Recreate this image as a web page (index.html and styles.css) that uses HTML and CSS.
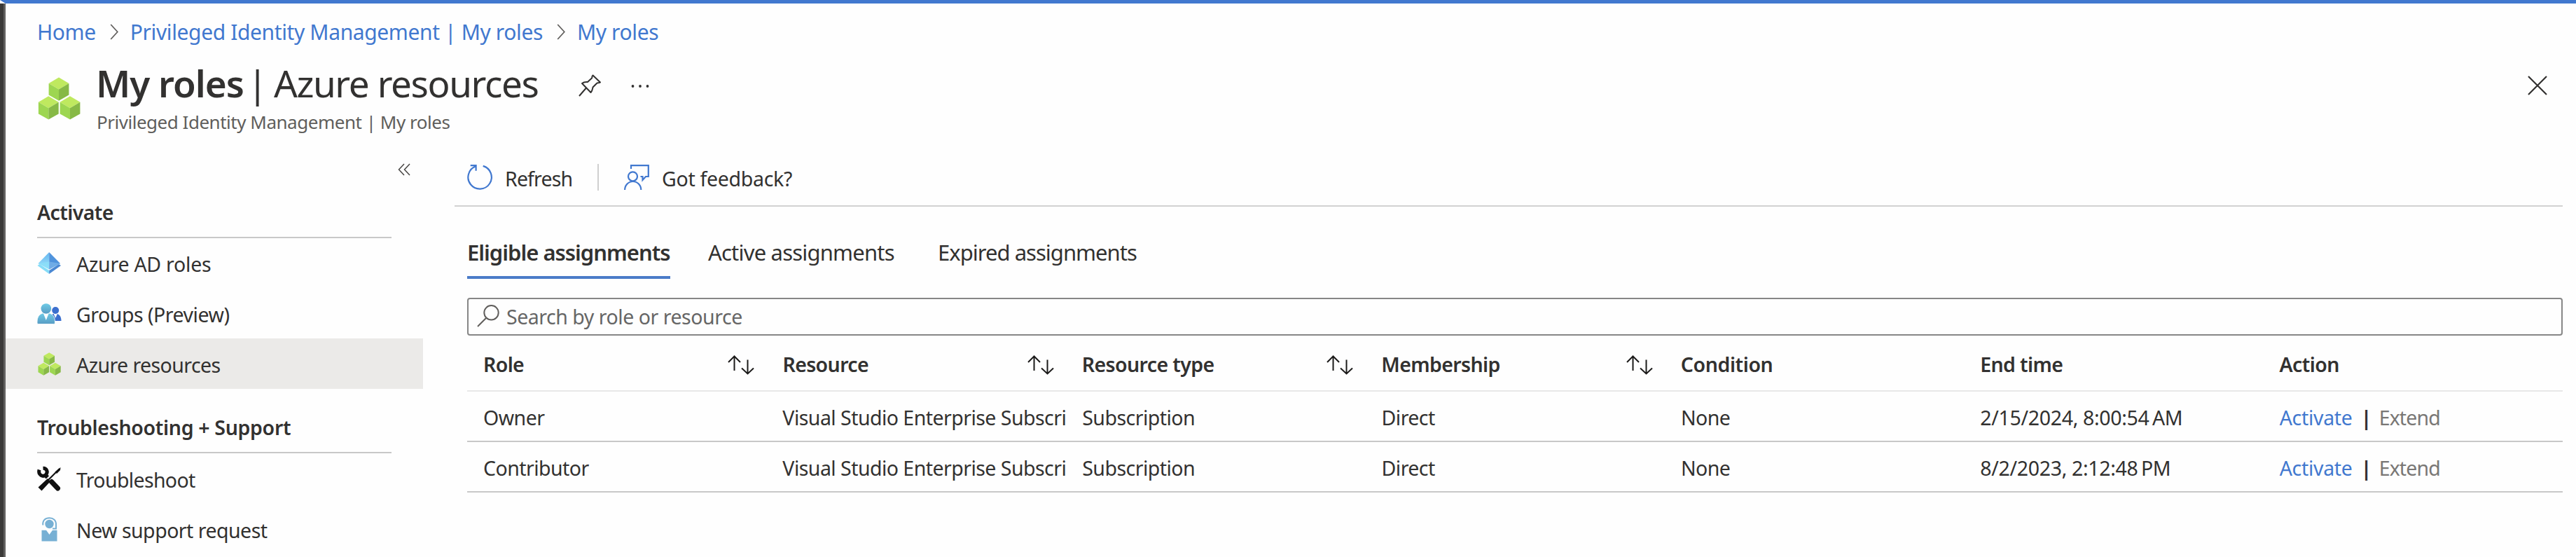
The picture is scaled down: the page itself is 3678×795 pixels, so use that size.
FILE: index.html
```html
<!DOCTYPE html>
<html lang="en">
<head>
<meta charset="utf-8">
<title>My roles | Azure resources</title>
<link rel="stylesheet" href="styles.css">
</head>
<body>
<svg class="defs" width="0" height="0" aria-hidden="true">
  <defs>
    <linearGradient id="person" x1="0" y1="0" x2="0" y2="1"><stop offset="0" stop-color="#6fcbe6"/><stop offset="1" stop-color="#589cc4"/></linearGradient>
    <linearGradient id="face" x1="0" y1="0" x2="0" y2="1"><stop offset="0" stop-color="#63b4ef"/><stop offset="1" stop-color="#a4e8fc"/></linearGradient>
    <symbol id="cubes" viewBox="0 0 61 61">
      <g id="cube">
        <path fill="#bfe95f" d="M30 .5 44.4 9 30 17.4 15.6 9z"/>
        <path fill="#9dd651" d="M15.6 9 30 17.4V33.8L15.6 25.6z"/>
        <path fill="#87b946" d="M44.4 9 30 17.4V33.8L44.4 25.6z"/>
      </g>
      <use href="#cube" x="-14.7" y="26.8"/>
      <use href="#cube" x="16" y="26.8"/>
    </symbol>
    <symbol id="sort" viewBox="0 0 38 28">
      <path fill="none" stroke="#1b1a19" stroke-width="2" d="M9.5 1.5V22M1 10 9.5 1.5 18 10M28.500 6.500V26.500M20 18.500 28.500 26.500 37 18.500"/>
    </symbol>
    <symbol id="chev" viewBox="0 0 12 24">
      <path fill="none" stroke="#605e5c" stroke-width="1.8" d="M1 1 11 12 1 23"/>
    </symbol>
  </defs>
</svg>
<div class="page">
  <nav class="crumbs">
    <a>Home</a><svg class="chev"><use href="#chev"/></svg><a>Privileged Identity Management | My roles</a><svg class="chev"><use href="#chev"/></svg><a>My roles</a>
  </nav>

  <header class="head">
    <svg class="head-icon"><use href="#cubes"/></svg>
    <div class="head-text">
      <div class="title-row">
        <h1><b>My roles</b><span class="bar">|</span><span class="sub">Azure resources</span></h1>
        <svg class="pin" viewBox="0 0 33 32"><path fill="none" stroke="#323130" stroke-width="2" stroke-linejoin="round" d="M20.500 1.500 31 11.500C29 13 27 11.500 26 13L20.500 18.500C20 21 20 23 17.500 26L5 13C8 10.500 10.500 11 13 11L19 5.500C20 4 18.500 3 20.500 1.500zM11 19.500 1 31"/></svg>
        <svg class="dots" viewBox="0 0 26 6"><g fill="#323130"><circle cx="2.500" cy="3" r="1.900"/><circle cx="13" cy="3" r="1.900"/><circle cx="23.500" cy="3" r="1.900"/></g></svg>
      </div>
      <p class="subtitle">Privileged Identity Management | My roles</p>
    </div>
    <svg class="close" viewBox="0 0 28 28"><path stroke="#323130" stroke-width="2.200" d="M1 1 27 27M27 1 1 27"/></svg>
  </header>

  <div class="body">
    <aside class="side">
      <div class="collapse"><svg width="18" height="18" viewBox="0 0 18 18"><path fill="none" stroke="#484644" stroke-width="1.500" d="M9 1 1.500 9 9 17M17 1 9.500 9 17 17"/></svg></div>
      <h2 class="t-activate">Activate</h2>
      <a class="item t-ad">
        <svg viewBox="0 0 35 35"><path fill="#86dcf7" d="M.5 21 3.500 19 17.200 28V33z"/><path fill="#4a88d2" d="M34 21 31 19 17.200 28V33z"/><path fill="url(#face)" d="M17.200 2V26.500L1.500 18z"/><path fill="#4f93dc" d="M17.200 2V26.500L33 18z"/><path fill="#8adff8" opacity=".75" d="M17.200 15.500V26.500L1.500 18z"/><path fill="#79b4ea" opacity=".75" d="M17.200 15.500V26.500L33 18z"/></svg>
        <span>Azure AD roles</span></a>
      <a class="item t-groups">
        <svg viewBox="0 0 35 35"><path fill="#3b6fce" d="M19 27C19 20 21 17.500 26 17.500 31 17.500 34.500 21 34.500 28H19z"/><path fill="#fff" d="M23.500 17.500H29L26.300 24z"/><circle cx="26.200" cy="13" r="5" fill="#3b6fce"/><path fill="url(#person)" stroke="#fff" stroke-width=".8" d="M0 30C0 21 4 16.500 12.800 16.500 21.500 16.500 25.500 21 25.500 30 25.500 32 25 32.500 23.500 32.500H2C.5 32.500 0 32 0 30z"/><path fill="#fff" d="M8.800 17H16.800L12.800 27z"/><circle cx="12.800" cy="10.500" r="7.300" fill="url(#person)"/></svg>
        <span>Groups (Preview)</span></a>
      <a class="item selected t-res">
        <svg viewBox="0 0 35 35"><use href="#cubes" x="1" y="1" width="33" height="33"/></svg>
        <span>Azure resources</span></a>
      <h2 class="second t-ts">Troubleshooting + Support</h2>
      <a class="item t-shoot">
        <svg viewBox="0 0 35 35"><path fill="none" stroke="#111" stroke-width="5" d="M3 4.500C1 12 8.500 15.500 12.500 11.500 16 7.500 13.500 2 8.500 2.200"/><path stroke="#111" stroke-width="6" d="M11 11.500 15 15.500"/><path stroke="#111" stroke-width="7" stroke-linecap="round" d="M20.500 21.500 29.500 31"/><path stroke="#fff" stroke-width="5" d="M22 12 12 22"/><path stroke="#111" stroke-width="2.200" d="M32 3 15 20"/><path fill="#111" d="M33.500 1 33 5 28 10 25.500 7.500zM15 17 19 21 6.500 34.500 1.500 29.500z"/></svg>
        <span>Troubleshoot</span></a>
      <a class="item t-new">
        <svg viewBox="0 0 35 35"><g fill="#77b0d4"><path d="M6.500 18.800H28.500V34.500H6.500z"/><circle cx="17.500" cy="10" r="6.200"/></g><path fill="#fff" d="M12.500 18H22.500L17.500 25z"/><path fill="none" stroke="#77b0d4" stroke-width="2" d="M8.300 11.500C7.500 4.500 12 1.300 17.500 1.300S27.500 4.500 27 11.500V16.500H22"/></svg>
        <span>New support request</span></a>
    </aside>

    <main class="main">
      <div class="toolbar">
        <svg class="tool" viewBox="0 0 36 36"><path fill="none" stroke="#4178cf" stroke-width="2.200" d="M22.700 1.900A16.700 16.700 0 1 1 12.300 2.300M4.700 1.200H12.600V8.800"/></svg>
        <span class="t-refresh">Refresh</span>
        <i class="divider"></i>
        <svg class="tool" viewBox="0 0 36 36"><path fill="none" stroke="#4178cf" stroke-width="2.200" d="M10 6V1.200H34.800V17H31L26.500 22V17H23.500M1.100 36A11.600 12 0 0 1 24.300 36"/><circle cx="12.500" cy="16.800" r="6.500" fill="none" stroke="#4178cf" stroke-width="2.200"/></svg>
        <span class="t-feedback">Got feedback?</span>
      </div>
      <div class="content">
        <div class="tabs">
          <a class="tab on">Eligible assignments</a>
          <a class="tab active-tab">Active assignments</a>
          <a class="tab expired-tab">Expired assignments</a>
        </div>
        <div class="search">
          <svg viewBox="0 0 32 32"><g fill="none" stroke="#605e5c" stroke-width="2"><circle cx="20.500" cy="11.300" r="10.200"/><path d="M13.200 18.700 1 31"/></g></svg>
          <span>Search by role or resource</span>
        </div>
        <div class="table">
          <div class="tr th">
            <div><span>Role</span><svg class="sort"><use href="#sort"/></svg></div>
            <div><span>Resource</span><svg class="sort"><use href="#sort"/></svg></div>
            <div><span>Resource type</span><svg class="sort"><use href="#sort"/></svg></div>
            <div><span>Membership</span><svg class="sort"><use href="#sort"/></svg></div>
            <div class="t-cond"><span>Condition</span></div>
            <div><span>End time</span></div>
            <div class="t-action"><span>Action</span></div>
          </div>
          <div class="tr">
            <div>Owner</div><div>Visual Studio Enterprise Subscri</div><div>Subscription</div><div>Direct</div><div>None</div><div class="date">2/15/2024, 8:00:54&#8239;AM</div>
            <div class="act"><a>Activate</a><b>|</b><span>Extend</span></div>
          </div>
          <div class="tr">
            <div>Contributor</div><div>Visual Studio Enterprise Subscri</div><div>Subscription</div><div>Direct</div><div>None</div><div class="date">8/2/2023, 2:12:48&#8239;PM</div>
            <div class="act"><a>Activate</a><b>|</b><span>Extend</span></div>
          </div>
        </div>
      </div>
    </main>
  </div>
</div>
</body>
</html>
```

FILE: styles.css
```css
* { box-sizing: border-box; }
body { margin: 0; background: #fff; color: #323130; font: 28.5px "Noto Sans", "Open Sans", sans-serif; }
h1, h2, p { margin: 0; }
svg { display: block; flex: none; overflow: visible; }
.defs { position: absolute; }
.page {
  height: 795px; overflow: hidden; display: flex; flex-direction: column;
  border-left: 8px solid transparent; border-top: 5px solid #4178cf;
  background: linear-gradient(90deg, #3b3a39 5px, #626160 5px, #626160 8px, #fefefe 8px) border-box;
}

.crumbs { height: 80px; display: flex; align-items: center; padding: 1px 0 0 45px; font-size: 30px; letter-spacing: -.38px; color: #4178cf; white-space: nowrap; }
.chev { width: 12px; height: 23px; margin: 0 17px 0 20px; }

.head { height: 128px; display: flex; align-items: flex-start; padding-left: 46px; }
.head-icon { width: 61px; height: 61px; margin-top: 25px; }
.head-text { margin-left: 20px; padding-top: 4px; flex: 1; }
.title-row { display: flex; align-items: center; height: 60px; }
h1 { width: 638px; padding-left: 2px; font-size: 53px; line-height: 60px; font-weight: 400; display: flex; white-space: nowrap; }
h1 b { font-weight: 600; letter-spacing: -1px; width: 216px; }
h1 .bar { width: 38px; }
h1 .sub { letter-spacing: -1.4px; }
.pin { width: 33px; height: 32px; margin-left: 53px; margin-top: 6px; }
.dots { width: 26px; height: 6px; margin-left: 42px; margin-top: 7px; }
.subtitle { margin-top: 5px; padding-left: 3px; font-size: 26px; line-height: 40px; letter-spacing: -.48px; color: #605e5c; }
.close { width: 28px; height: 28px; margin: 23px 41px 0 0; }

.body { flex: 1; display: flex; }
.side { width: 641px; }
.collapse { height: 55px; padding: 20px 0 0 560px; }
h2 { margin: 0 90px -1px 45px; height: 72px; border-bottom: 2px solid #c8c8c8; font-size: 28.5px; line-height: 71px; font-weight: 600; white-space: nowrap; }
h2.second { margin-top: 20px; margin-bottom: 0; }
.item { display: flex; align-items: center; width: 596px; height: 72px; padding: 0 0 0 45px; gap: 21px; }
.item svg { width: 35px; height: 35px; }
.item span { padding-top: 4px; white-space: nowrap; }
.selected { background: #ebeae8; }
.t-activate { letter-spacing: -.6px; }
.t-ad { letter-spacing: -.25px; }
.t-groups { letter-spacing: -.48px; }
.t-res { letter-spacing: -.58px; }
.t-ts { letter-spacing: -.32px; }
.t-shoot { letter-spacing: -.65px; }
.t-new { letter-spacing: -.52px; }

.main { width: 3010px; }
.toolbar { height: 82px; border-bottom: 2px solid #d2d2d2; display: flex; align-items: center; padding-left: 18px; }
.toolbar span { margin-left: 18px; padding-top: 3px; white-space: nowrap; }
.tool { width: 36px; height: 36px; }
.toolbar .t-refresh { letter-spacing: -.85px; width: 132px; }
.t-feedback { letter-spacing: -.3px; }
.divider { width: 2px; height: 38px; background: #cfcfcf; margin-right: 36px; }
.content { padding: 29px 0 0 18px; }
.tabs { display: flex; gap: 54px; height: 74px; font-size: 31px; line-height: 73px; white-space: nowrap; }
.tab.on { width: 290px; font-weight: 600; letter-spacing: -1px; border-bottom: 4px solid #4a7bc8; }
.active-tab { width: 274px; letter-spacing: -.8px; }
.expired-tab { letter-spacing: -.98px; }
.search { margin-top: 27px; height: 54px; border: 2px solid #868686; border-radius: 4px; display: flex; align-items: center; padding-left: 12px; gap: 10px; color: #666; letter-spacing: -.47px; }
.search svg { width: 32px; height: 32px; margin-bottom: 3px; }
.search span { white-space: nowrap; }

.tr { display: grid; grid-template-columns: repeat(7, 1fr); height: 72px; line-height: 70px; border-bottom: 2px solid #c8c8c8; letter-spacing: -.54px; white-space: nowrap; }
.tr > div { padding: 2px 0 0 23px; }
.th { height: 80px; line-height: 78px; border-color: #e8e8e8; font-weight: 600; letter-spacing: -.62px; }
.th > div { display: flex; justify-content: space-between; align-items: center; padding-right: 17px; }
.sort { width: 38px; height: 28px; margin-top: 2px; }
.tr > .t-cond { letter-spacing: -.4px; }
.tr > .date { letter-spacing: -.33px; }
.tr > .act { display: flex; }
.act a { color: #4178cf; width: 116px; letter-spacing: -.3px; }
.act b { width: 26px; }
.act span { color: #797775; letter-spacing: -.85px; }
```
